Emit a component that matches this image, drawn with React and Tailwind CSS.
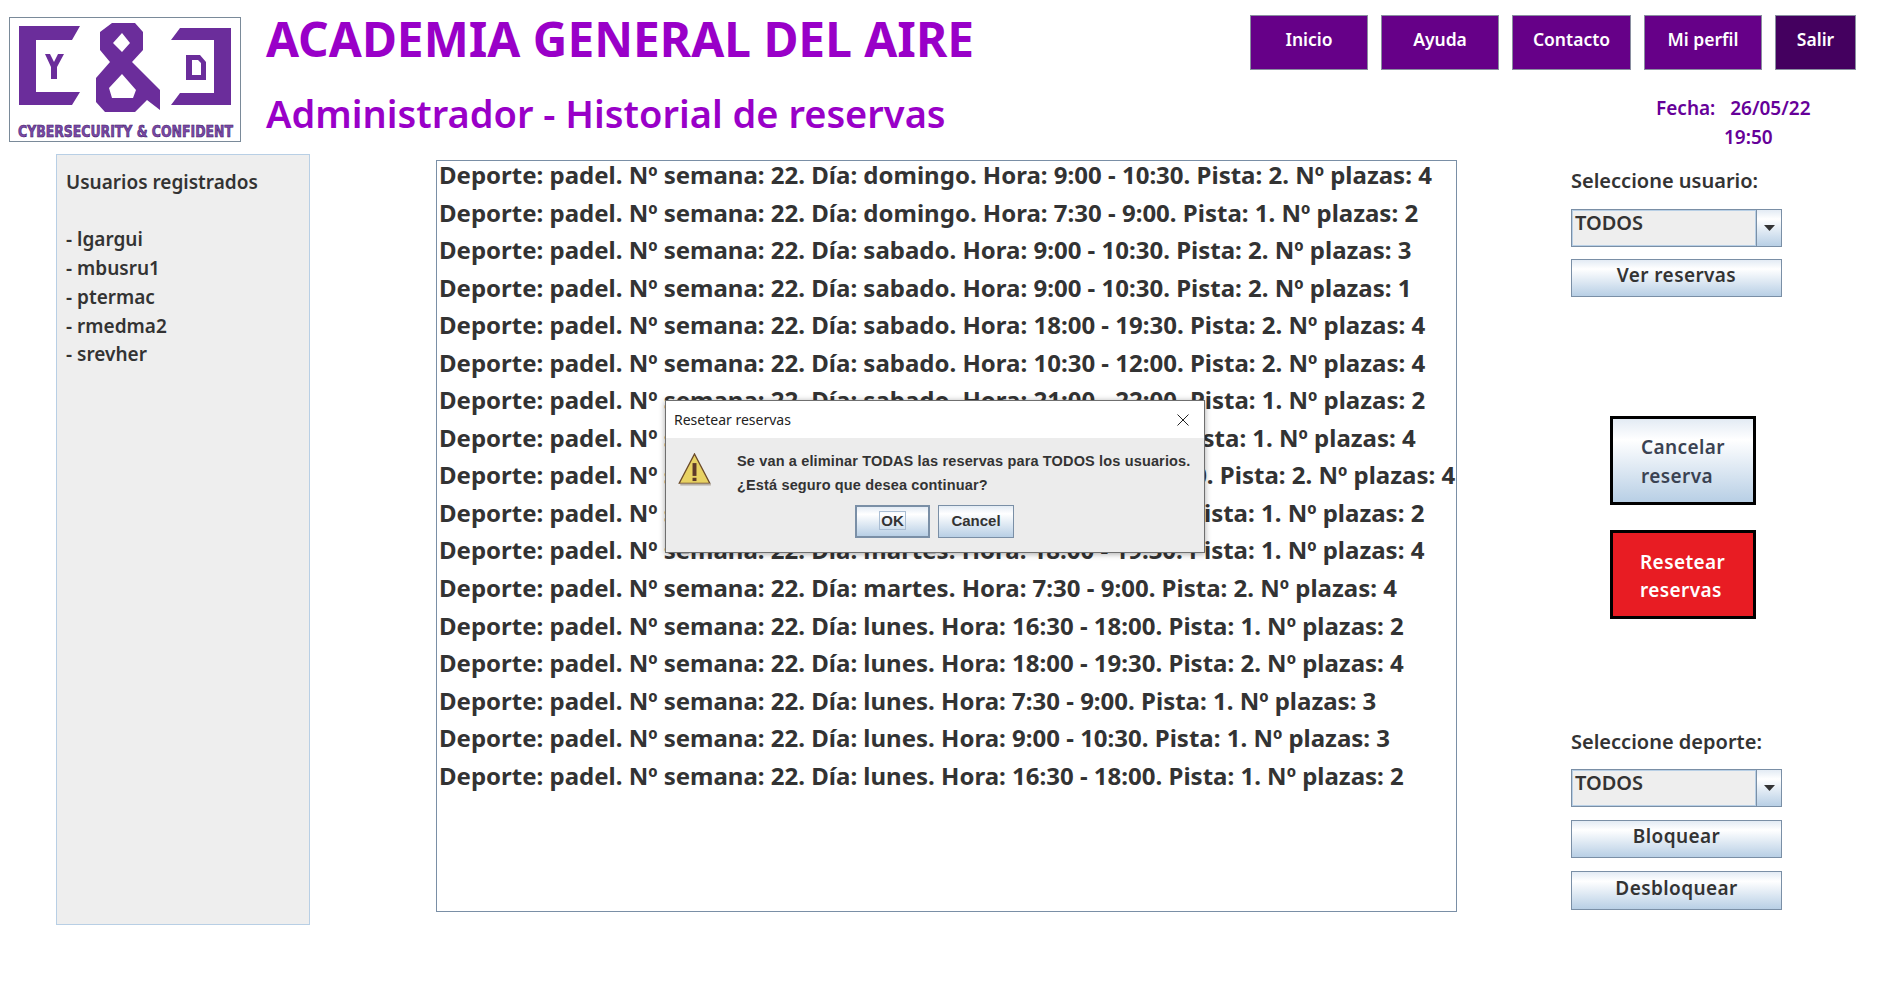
const reservas = [
  "Día: domingo. Hora: 9:00 - 10:30. Pista: 2. Nº plazas: 4",
  "Día: domingo. Hora: 7:30 - 9:00. Pista: 1. Nº plazas: 2",
  "Día: sabado. Hora: 9:00 - 10:30. Pista: 2. Nº plazas: 3",
  "Día: sabado. Hora: 9:00 - 10:30. Pista: 2. Nº plazas: 1",
  "Día: sabado. Hora: 18:00 - 19:30. Pista: 2. Nº plazas: 4",
  "Día: sabado. Hora: 10:30 - 12:00. Pista: 2. Nº plazas: 4",
  "Día: sabado. Hora: 21:00 - 22:00. Pista: 1. Nº plazas: 2",
  "Día: jueves. Hora: 18:00 - 19:30. Pista: 1. Nº plazas: 4",
  "Día: miercoles. Hora: 19:30 - 21:00. Pista: 2. Nº plazas: 4",
  "Día: martes. Hora: 19:30 - 21:00. Pista: 1. Nº plazas: 2",
  "Día: martes. Hora: 18:00 - 19:30. Pista: 1. Nº plazas: 4",
  "Día: martes. Hora: 7:30 - 9:00. Pista: 2. Nº plazas: 4",
  "Día: lunes. Hora: 16:30 - 18:00. Pista: 1. Nº plazas: 2",
  "Día: lunes. Hora: 18:00 - 19:30. Pista: 2. Nº plazas: 4",
  "Día: lunes. Hora: 7:30 - 9:00. Pista: 1. Nº plazas: 3",
  "Día: lunes. Hora: 9:00 - 10:30. Pista: 1. Nº plazas: 3",
  "Día: lunes. Hora: 16:30 - 18:00. Pista: 1. Nº plazas: 2",
];

const usuarios = ["lgargui", "mbusru1", "ptermac", "rmedma2", "srevher"];

const navItems = [
  { label: "Inicio", width: "w-[118px]", bg: "bg-[#660088]" },
  { label: "Ayuda", width: "w-[118px]", bg: "bg-[#660088]" },
  { label: "Contacto", width: "w-[119px]", bg: "bg-[#660088]" },
  { label: "Mi perfil", width: "w-[118px]", bg: "bg-[#660088]" },
  { label: "Salir", width: "w-[81px]", bg: "bg-[#44005f]" },
];

const metal = "bg-linear-to-b from-[#e3ebf4] via-white via-25% to-[#b8cfe5]";

function Logo() {
  return (
    <div className="w-[232px] h-[125px] border border-[#7a8a99] bg-white shrink-0">
      <svg width="230" height="123" viewBox="10 18 230 123">
        <polygon fill="#6b2d9b" points="19,26 80,26 72,40 36,40 36,92 80,92 72,105 19,105" />
        <polygon fill="#6b2d9b" points="180,28 231,28 231,105 171,105 180,93 214,93 214,40 171,40" />
        <polygon fill="#6b2d9b" points="45,54 50,54 54,62 58,54 64,54 57,67 57,79 51,79 51,67" />
        <path fill="#6b2d9b" fillRule="evenodd" d="M186 55H200L206 62V80H186ZM192 60V75H201V63L198 60Z" />
        <path
          fill="#6b2d9b"
          fillRule="evenodd"
          d="M112 23H135L143 32V50L132 62L160 90V110L147 100L135 112H105L96 102V78L110 62L100 50V32ZM122 33L113 43L122 52L130 43ZM122 74L109 88L112 98H133L136 90Z"
        />
        <text
          x="18"
          y="137"
          textLength="215"
          lengthAdjust="spacingAndGlyphs"
          fill="#7a4aa8"
          stroke="#3f1a66"
          strokeWidth="0.6"
          fontFamily="'DejaVu Sans', sans-serif"
          fontWeight="700"
          fontSize="15"
        >
          CYBERSECURITY & CONFIDENT
        </text>
      </svg>
    </div>
  );
}

function Combo({ value }) {
  return (
    <div className="flex w-[211px] h-[38px] border border-[#7a8fa6]">
      <div className="flex-1 bg-[#eeeeee] border border-[#b8cfe5] pl-[2px] text-[20px] leading-[24px] font-semibold text-[#333]">
        {value}
      </div>
      <div className={`w-[25px] flex items-center justify-center border-l border-[#7a8fa6] ${metal}`}>
        <svg width="11" height="6" viewBox="0 0 11 6">
          <polygon points="0,0 11,0 5.5,6" fill="#333" />
        </svg>
      </div>
    </div>
  );
}

function MetalButton({ children, className = "" }) {
  return (
    <button className={`w-[211px] border border-[#7a8fa6] pb-[5px] text-[19px] font-semibold text-[#333] tracking-[0.4px] ${metal} ${className}`}>
      {children}
    </button>
  );
}

function WarningIcon() {
  return (
    <svg width="35" height="33" viewBox="0 0 32 36" preserveAspectRatio="none" className="shrink-0 mt-[4px]">
      <polygon points="16,1 30,33 2,33" fill="#e8d263" stroke="#6b4a2a" strokeWidth="1.2" />
      <line x1="3" y1="34.5" x2="31" y2="34.5" stroke="#b9b2a8" strokeWidth="2" />
      <rect x="14.2" y="11" width="3.6" height="14" fill="#5e3a2a" />
      <rect x="14.2" y="27" width="3.6" height="3.6" fill="#5e3a2a" />
    </svg>
  );
}

function Dialog() {
  return (
    <div className="absolute left-[665px] top-[400px] w-[540px] h-[153px] bg-[#ececec] border border-[#6f6f6f] shadow-[0_1px_6px_rgba(0,0,0,0.35)] font-['Liberation_Sans',sans-serif]">
      <div className="flex items-center justify-between h-[37px] bg-white pl-[8px] pr-[14px]">
        <span className="font-['Noto_Sans',sans-serif] text-[14px] text-[#222]">Resetear reservas</span>
        <svg width="14" height="14" viewBox="0 0 14 14">
          <path d="M1.5 1.5L12.5 12.5M12.5 1.5L1.5 12.5" stroke="#222" strokeWidth="1" fill="none" />
        </svg>
      </div>
      <div className="flex pl-[11px] pt-[11px]">
        <WarningIcon />
        <div className="ml-[25px] text-[14.5px] leading-[24px] font-bold text-[#333] tracking-[0.15px] whitespace-nowrap">
          <div>Se van a eliminar TODAS las reservas para TODOS los usuarios.</div>
          <div>¿Está seguro que desea continuar?</div>
        </div>
      </div>
      <div className="flex justify-center gap-[8px] mt-[8px] pr-[1px]">
        <button className={`w-[75px] h-[33px] border-2 border-[#7a8fa6] text-[15px] font-bold text-[#333] ${metal}`}>
          <span className="border border-[#a9bdd3] px-[1px]">OK</span>
        </button>
        <button className={`w-[76px] h-[33px] border border-[#7a8fa6] text-[15px] font-bold text-[#333] ${metal}`}>Cancel</button>
      </div>
    </div>
  );
}

export default function App() {
  return (
    <div className="relative w-[1880px] h-[981px] bg-white overflow-hidden font-['Noto_Sans',sans-serif]">
      <header className="flex h-[154px]">
        <div className="pl-[9px] pt-[17px]">
          <Logo />
        </div>
        <div className="ml-[25px] flex-1 text-[#9900c8] font-bold whitespace-nowrap">
          <h1 className="text-[47.8px] leading-[60px] mt-[9px]">ACADEMIA GENERAL DEL AIRE</h1>
          <h2 className="text-[38px] leading-[50px] mt-[19px] font-semibold">Administrador - Historial de reservas</h2>
        </div>
        <div className="w-[630px] pt-[15px]">
          <nav className="flex gap-[13px]">
            {navItems.map((item) => (
              <div
                key={item.label}
                className={`${item.width} ${item.bg} h-[55px] border border-[#8a8fa0] text-white text-[17.5px] font-semibold text-center pt-[11px] leading-[24px]`}
              >
                {item.label}
              </div>
            ))}
          </nav>
          <div className="mt-[24px] ml-[406px] text-[#660099] text-[19px] leading-[29px] font-semibold whitespace-pre">
            <div>{"Fecha:   26/05/22"}</div>
            <div className="ml-[68px]">19:50</div>
          </div>
        </div>
      </header>

      <main className="flex pl-[56px]">
        <aside className="w-[254px] h-[771px] bg-[#eeeeee] border border-[#b8cfe5] pl-[9px] pt-[13px] text-[19px] leading-[28.8px] font-semibold text-[#333]">
          <div>Usuarios registrados</div>
          <div className="mt-[28.4px]">
            {usuarios.map((u) => (
              <div key={u}>- {u}</div>
            ))}
          </div>
        </aside>

        <section className="ml-[126px] mt-[6px] w-[1021px] h-[752px] border border-[#7a8fa6] pl-[2px] flex flex-col gap-[9.55px] text-[#333] text-[24px] leading-[28px] font-bold whitespace-nowrap">
          {reservas.map((r, i) => (
            <div key={i}>Deporte: padel. Nº semana: 22. {r}</div>
          ))}
        </section>

        <div className="ml-[114px] w-[211px] flex flex-col">
          <div className="mt-[13px] h-[28px] text-[20px] leading-[28px] font-semibold text-[#333]">Seleccione usuario:</div>
          <div className="mt-[14px]"><Combo value="TODOS" /></div>
          <MetalButton className="h-[38px] mt-[12px]">Ver reservas</MetalButton>

          <div className={`mt-[119px] ml-[39px] w-[146px] h-[89px] border-[3px] border-black pl-[28px] pt-[14px] text-[19px] leading-[29px] font-semibold text-[#3a4252] tracking-[0.4px] ${metal}`}>
            Cancelar<br />reserva
          </div>
          <div className="mt-[25px] ml-[39px] w-[146px] h-[89px] border-[3px] border-black bg-[#e81c23] pl-[27px] pt-[15px] text-[19px] leading-[28px] font-semibold text-white tracking-[0.4px]">
            Resetear<br />reservas
          </div>

          <div className="mt-[109px] h-[28px] text-[20px] leading-[28px] font-semibold text-[#333]">Seleccione deporte:</div>
          <div className="mt-[13px]"><Combo value="TODOS" /></div>
          <MetalButton className="h-[38px] mt-[13px]">Bloquear</MetalButton>
          <MetalButton className="h-[39px] mt-[13px]">Desbloquear</MetalButton>
        </div>
      </main>

      <Dialog />
    </div>
  );
}
